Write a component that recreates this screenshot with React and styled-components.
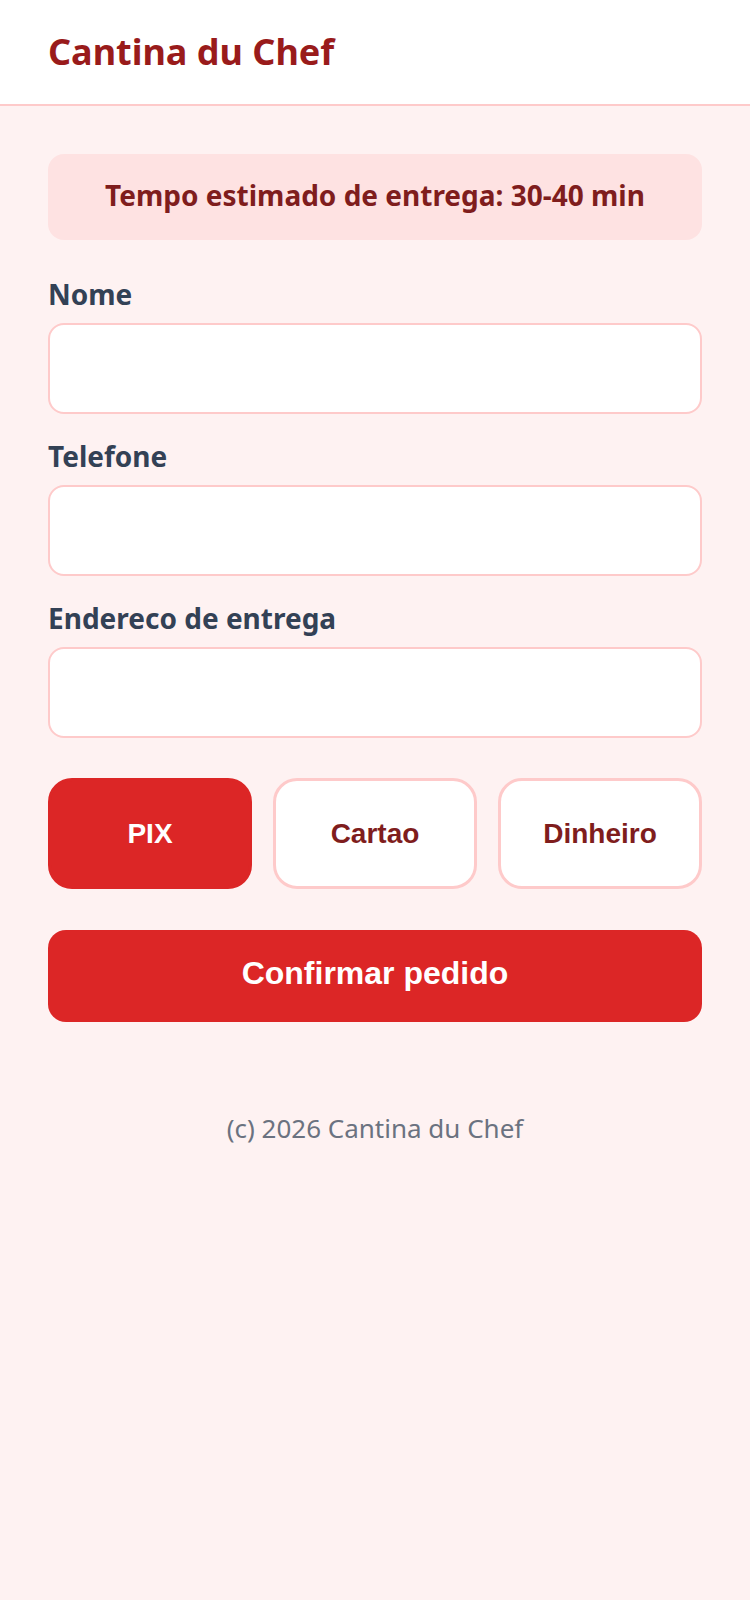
import React, { useState } from "react";
import styled, { createGlobalStyle } from "styled-components";

const GlobalStyle = createGlobalStyle`
  * { box-sizing: border-box; }
  html, body { margin: 0; padding: 0; background: #fef2f2; }
  body { font-family: "Noto Sans", "Open Sans", sans-serif; }
`;

const Page = styled.div`
  min-height: 1600px;
  background: #fef2f2;
`;

const Header = styled.header`
  height: 106px;
  background: #ffffff;
  border-bottom: 2px solid #fecaca;
  display: flex;
  align-items: center;
  padding: 0 48px;
`;

const Brand = styled.h1`
  margin: 0;
  font-size: 36px;
  font-weight: 700;
  color: #991b1b;
  line-height: 1.2;
`;

const Main = styled.main`
  padding: 48px 48px 0;
  display: flex;
  flex-direction: column;
`;

const Banner = styled.div`
  background: #fee2e2;
  border-radius: 16px;
  height: 86px;
  padding-bottom: 4px;
  display: flex;
  align-items: center;
  justify-content: center;
  color: #7f1d1d;
  font-weight: 700;
  font-size: 28px;
  margin-bottom: 35px;
`;

const Form = styled.form`
  display: flex;
  flex-direction: column;
  gap: 23px;
`;

const Field = styled.div`
  display: flex;
  flex-direction: column;
  gap: 10px;
`;

const Label = styled.label`
  font-size: 28px;
  font-weight: 700;
  color: #334155;
  line-height: 38px;
`;

const Input = styled.input`
  height: 91px;
  width: 100%;
  border: 2px solid #fecaca;
  border-radius: 16px;
  background: #ffffff;
  font-size: 24px;
  padding: 0 20px;
  outline: none;
  font-family: inherit;
`;

const PayRow = styled.div`
  display: grid;
  grid-template-columns: repeat(3, 1fr);
  gap: 21px;
  margin-top: 17px;
`;

const PayButton = styled.button`
  height: 111px;
  border-radius: 24px;
  border: 3px solid ${(p) => (p.$active ? "#dc2626" : "#fecaca")};
  background: ${(p) => (p.$active ? "#dc2626" : "#ffffff")};
  color: ${(p) => (p.$active ? "#ffffff" : "#7f1d1d")};
  font-family: "Liberation Sans", Arial, sans-serif;
  font-weight: 700;
  font-size: 28px;
  cursor: pointer;
`;

const Submit = styled.button`
  margin-top: 18px;
  height: 92px;
  width: 100%;
  border: none;
  border-radius: 18px;
  padding: 0 0 5px;
  background: #dc2626;
  color: #ffffff;
  font-family: "Liberation Sans", Arial, sans-serif;
  font-weight: 700;
  font-size: 32px;
  cursor: pointer;
`;

const Footer = styled.footer`
  text-align: center;
  color: #6b7280;
  font-size: 26px;
  padding: 88px 0 0;
`;

export default function App() {
  const [method, setMethod] = useState("PIX");
  const methods = ["PIX", "Cartao", "Dinheiro"];
  return (
    <Page>
      <GlobalStyle />
      <Header>
        <Brand>Cantina du Chef</Brand>
      </Header>
      <Main>
        <Banner>Tempo estimado de entrega: 30-40 min</Banner>
        <Form onSubmit={(e) => e.preventDefault()}>
          <Field>
            <Label htmlFor="nome">Nome</Label>
            <Input id="nome" type="text" />
          </Field>
          <Field>
            <Label htmlFor="tel">Telefone</Label>
            <Input id="tel" type="tel" />
          </Field>
          <Field>
            <Label htmlFor="end">Endereco de entrega</Label>
            <Input id="end" type="text" />
          </Field>
          <PayRow>
            {methods.map((m) => (
              <PayButton
                key={m}
                type="button"
                $active={method === m}
                onClick={() => setMethod(m)}
              >
                {m}
              </PayButton>
            ))}
          </PayRow>
          <Submit type="submit">Confirmar pedido</Submit>
        </Form>
        <Footer>(c) 2026 Cantina du Chef</Footer>
      </Main>
    </Page>
  );
}
